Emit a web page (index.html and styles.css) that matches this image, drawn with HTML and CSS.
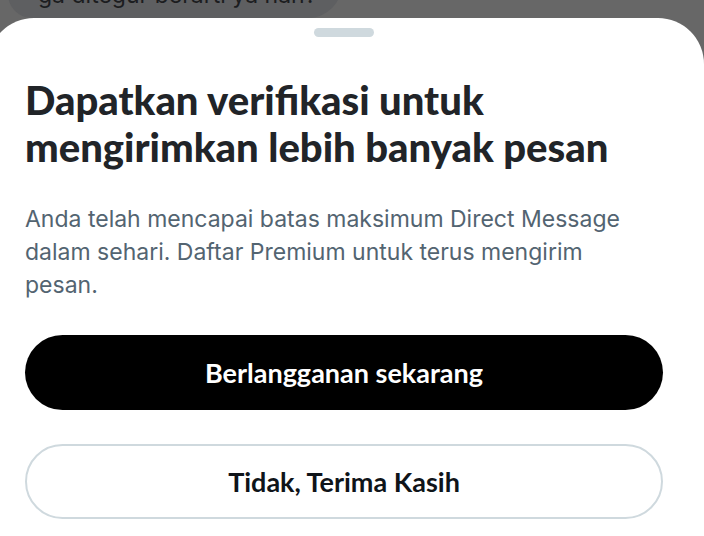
FILE: index.html
```html
<!DOCTYPE html>
<html lang="id">
<head>
  <meta charset="UTF-8" />
  <meta name="viewport" content="width=device-width, initial-scale=1.0" />
  <title>Verifikasi - Direct Message</title>
  <link rel="stylesheet" href="styles.css">
</head>
<body>
  <div class="backdrop">
    <div class="bubble">ga ditegur berarti ya hah?</div>
  </div>

  <div class="sheet">
    <div class="handle"></div>

    <h1>Dapatkan verifikasi untuk mengirimkan lebih banyak pesan</h1>
    <p class="desc">Anda telah mencapai batas maksimum Direct Message dalam sehari. Daftar Premium untuk terus mengirim pesan.</p>

    <div class="actions">
      <button class="btn btn-primary">Berlangganan sekarang</button>
      <button class="btn btn-outline">Tidak, Terima Kasih</button>
    </div>
  </div>
</body>
</html>
```

FILE: styles.css
```css
* {
  box-sizing: border-box;
  margin: 0;
  padding: 0;
}

body {
  background: #676767;
  height: 536px;
  overflow: hidden;
  font-family: 'Lato', 'Noto Sans', sans-serif;
}

.backdrop {
  height: 18px;
  overflow: hidden;
}

.bubble {
  margin: -44px 0 0 8px;
  width: 334px;
  height: 62px;
  padding: 19px 0 0 30px;
  background: #5e5f61;
  border-radius: 0 0 34px 24px;
  color: #1c1d1f;
  font-family: 'Inter', sans-serif;
  font-size: 23px;
  line-height: 40px;
  white-space: nowrap;
}

.sheet {
  margin-left: -12px;
  width: 716px;
  height: 518px;
  overflow: hidden;
  background: #fff;
  border-radius: 46px 46px 0 0;
  padding: 10px 41px 0 37px;
}

.handle {
  width: 60px;
  height: 9px;
  margin: 0 auto;
  background: #cfd9de;
  border-radius: 5px;
}

h1 {
  margin-top: 40px;
  color: #212428;
  font-size: 40px;
  font-weight: 900;
  line-height: 47px;
}

.desc {
  max-width: 610px;
  margin-top: 32px;
  color: #536471;
  font-family: 'Inter', sans-serif;
  font-size: 23px;
  line-height: 33px;
}

.actions {
  display: flex;
  flex-direction: column;
  gap: 34px;
  margin-top: 33px;
}

.btn {
  flex: none;
  height: 75px;
  border-radius: 38px;
  font-family: 'Lato', sans-serif;
  font-size: 27px;
  font-weight: 700;
  cursor: pointer;
}

.btn-primary {
  background: #000;
  color: #fff;
  border: none;
}

.btn-outline {
  background: #fff;
  color: #0f1419;
  border: 2px solid #cfd9de;
}
```
